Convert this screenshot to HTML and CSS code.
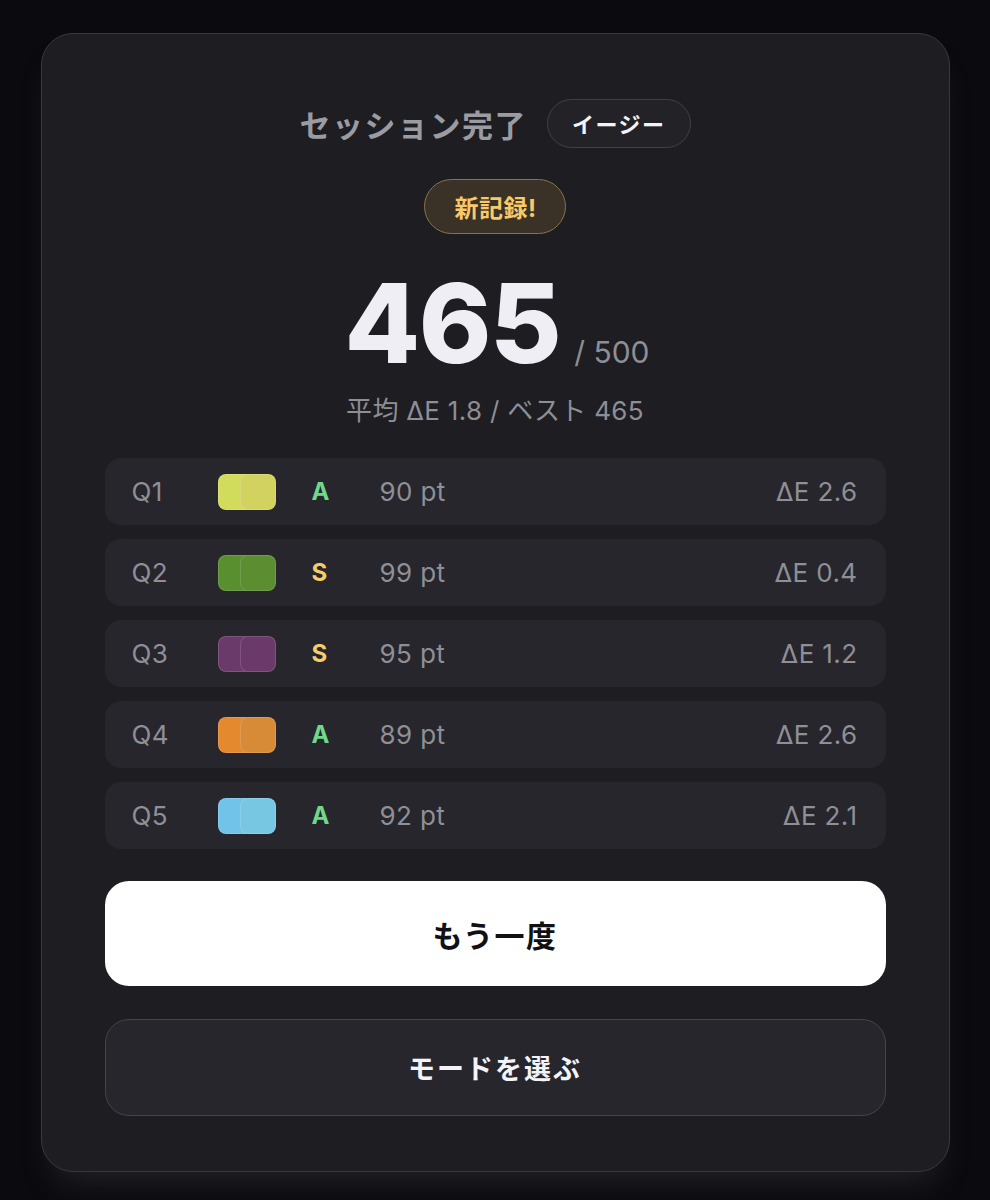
FILE: index.html
```html
<!DOCTYPE html>
<html lang="ja">
<head>
<meta charset="utf-8">
<title>セッション完了</title>
<link rel="stylesheet" href="styles.css">
</head>
<body>
<main class="card">
  <div class="head">
    <h1 class="title">セッション完了</h1>
    <span class="mode">イージー</span>
  </div>
  <div class="badge">新記録!</div>
  <div class="score"><span class="big">465</span><span class="max">/ 500</span></div>
  <p class="sub">平均 ΔE 1.8 / ベスト 465</p>
  <ul class="rows">
    <li class="row"><span class="q">Q1</span><span class="sw"><i style="background:#d1dc5c"></i><i style="background:#d2d260"></i></span><span class="g a">A</span><span class="pt">90 pt</span><span class="de">ΔE 2.6</span></li>
    <li class="row"><span class="q">Q2</span><span class="sw"><i style="background:#5a8f2f"></i><i style="background:#5c8d30"></i></span><span class="g s">S</span><span class="pt">99 pt</span><span class="de">ΔE 0.4</span></li>
    <li class="row"><span class="q">Q3</span><span class="sw"><i style="background:#6a3a6a"></i><i style="background:#6b3a6b"></i></span><span class="g s">S</span><span class="pt">95 pt</span><span class="de">ΔE 1.2</span></li>
    <li class="row"><span class="q">Q4</span><span class="sw"><i style="background:#e5892f"></i><i style="background:#d88b36"></i></span><span class="g a">A</span><span class="pt">89 pt</span><span class="de">ΔE 2.6</span></li>
    <li class="row"><span class="q">Q5</span><span class="sw"><i style="background:#72c3ea"></i><i style="background:#77c7e2"></i></span><span class="g a">A</span><span class="pt">92 pt</span><span class="de">ΔE 2.1</span></li>
  </ul>
  <button class="btn primary">もう一度</button>
  <button class="btn secondary">モードを選ぶ</button>
</main>
</body>
</html>
```
FILE: styles.css
```css
* { box-sizing: border-box; }
html, body { margin: 0; padding: 0; }
body {
  background: #0b0b0f;
  font-family: Inter, "Noto Sans CJK JP", sans-serif;
  color: #f0f0f5;
  min-height: 1200px;
  padding-top: 33px;
}
.card {
  width: 909px;
  margin: 0 auto;
  background: #1d1d22;
  border: 1.5px solid #38383e;
  border-radius: 32px;
  padding: 64px 63px 55px;
  display: flex;
  flex-direction: column;
  align-items: center;
  box-shadow: 0 22px 30px -12px rgba(60, 60, 66, 0.45);
}
.head {
  display: flex;
  align-items: center;
  gap: 20px;
  height: 50px;
}
.title {
  margin: 0;
  font-size: 31px;
  font-weight: 700;
  color: #9b9ba2;
  letter-spacing: 1.5px;
}
.mode {
  display: inline-flex;
  align-items: center;
  height: 49px;
  padding: 0 24px;
  border: 1.5px solid #404046;
  border-radius: 999px;
  background: #222227;
  font-size: 22px;
  font-weight: 700;
  color: #f4f4f8;
  letter-spacing: 1.5px;
}
.badge {
  margin-top: 31px;
  height: 55px;
  padding: 0 28px 0 29px;
  display: inline-flex;
  align-items: center;
  border-radius: 999px;
  background: #3a3226;
  border: 1.5px solid #8b7447;
  color: #f7c96b;
  font-size: 24px;
  font-weight: 700;
  letter-spacing: 0.5px;
}
.score {
  margin-top: 34px;
  display: flex;
  align-items: baseline;
  gap: 14px;
  line-height: 1;
  padding-left: 4px;
}
.big {
  font-size: 110px;
  font-weight: 800;
  color: #efeef5;
  letter-spacing: -1.5px;
}
.max {
  font-size: 30px;
  color: #8e8e95;
}
.sub {
  margin: 12px 0 0;
  font-size: 26px;
  color: #8e8e95;
  letter-spacing: 0.3px;
}
.rows {
  list-style: none;
  margin: 31px 0 0;
  padding: 0;
  width: 100%;
  display: flex;
  flex-direction: column;
  gap: 14px;
}
.row {
  height: 67px;
  background: #26262c;
  border-radius: 16px;
  display: flex;
  align-items: center;
  padding: 0 28px 0 27px;
  font-size: 26px;
  color: #8f8f96;
  letter-spacing: 0.4px;
}
.q { width: 86px; }
.sw { display: flex; width: 94px; }
.sw i {
  display: block;
  width: 36px;
  height: 36px;
  border-radius: 8px;
  border: 1.5px solid rgba(255, 255, 255, 0.14);
}
.sw i + i { margin-left: -14px; }
.g {
  width: 68px;
  font-weight: 700;
  font-size: 24px;
  letter-spacing: 0;
}
.g.a { color: #6fd88a; }
.g.s { color: #f6cd6b; }
.pt { flex: 1; }
.de { text-align: right; }
.btn {
  width: 100%;
  font-family: inherit;
  font-weight: 700;
  border-radius: 24px;
  cursor: pointer;
}
.primary {
  margin-top: 32px;
  height: 105px;
  background: #ffffff;
  color: #111114;
  border: none;
  font-size: 30px;
  letter-spacing: 1.5px;
}
.secondary {
  margin-top: 33px;
  height: 97px;
  background: #26262c;
  color: #f4f4f8;
  border: 1.5px solid #44444a;
  font-size: 27px;
  letter-spacing: 2px;
}
```
